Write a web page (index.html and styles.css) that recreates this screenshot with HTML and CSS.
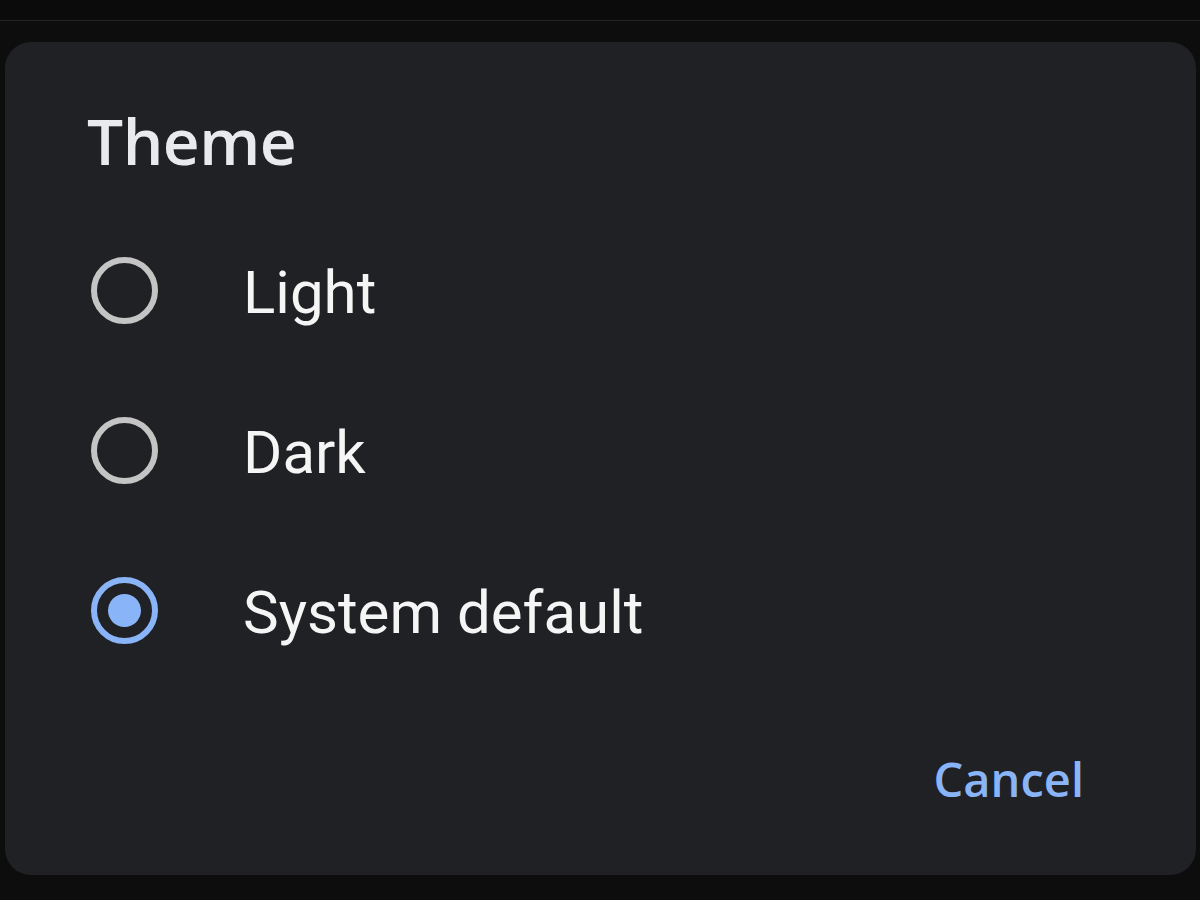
FILE: index.html
```html
<!DOCTYPE html>
<html>
<head>
<meta charset="utf-8">
<link rel="stylesheet" href="styles.css">
</head>
<body>
<div class="topbar"></div>
<div class="dialog">
  <div class="header"><h1 class="title">Theme</h1></div>
  <div class="options">
    <div class="option"><span class="radio"></span><span class="label">Light</span></div>
    <div class="option"><span class="radio"></span><span class="label">Dark</span></div>
    <div class="option"><span class="radio checked"></span><span class="label">System default</span></div>
  </div>
  <div class="footer"><span class="btn">Cancel</span></div>
</div>
</body>
</html>
```
FILE: styles.css
```css
html, body {
  margin: 0;
  padding: 0;
  background: #0d0d0e;
  width: 1200px;
  height: 900px;
  overflow: hidden;
}
.topbar {
  height: 20px;
  border-bottom: 1px solid #232325;
  background: #0b0b0c;
}
.dialog {
  margin: 21px 0 0 5px;
  width: 1191px;
  height: 833px;
  background: #202124;
  border-radius: 26px;
  box-sizing: border-box;
}
.header {
  height: 168px;
  padding: 59px 0 0 82px;
  box-sizing: border-box;
}
.title {
  margin: 0;
  font-family: "Open Sans", sans-serif;
  font-weight: 600;
  font-size: 64px;
  line-height: 80px;
  letter-spacing: -0.5px;
  color: #e8eaed;
}
.option {
  height: 160px;
  display: flex;
  align-items: center;
  padding-left: 86px;
}
.radio {
  width: 67px;
  height: 67px;
  border-radius: 50%;
  border: 6px solid #c4c4c4;
  box-sizing: border-box;
  flex: none;
  display: flex;
  align-items: center;
  justify-content: center;
}
.radio.checked {
  border-color: #8ab4f8;
}
.radio.checked::after {
  content: "";
  width: 33px;
  height: 33px;
  border-radius: 50%;
  background: #8ab4f8;
}
.label {
  margin-left: 85px;
  padding-top: 4px;
  font-family: Roboto, sans-serif;
  font-size: 60px;
  color: #f5f5f5;
}
.footer {
  display: flex;
  justify-content: flex-end;
  padding: 66px 112px 0 0;
}
.btn {
  font-family: "Open Sans", sans-serif;
  font-weight: 600;
  font-size: 47px;
  line-height: 1;
  color: #8ab4f8;
}
```
